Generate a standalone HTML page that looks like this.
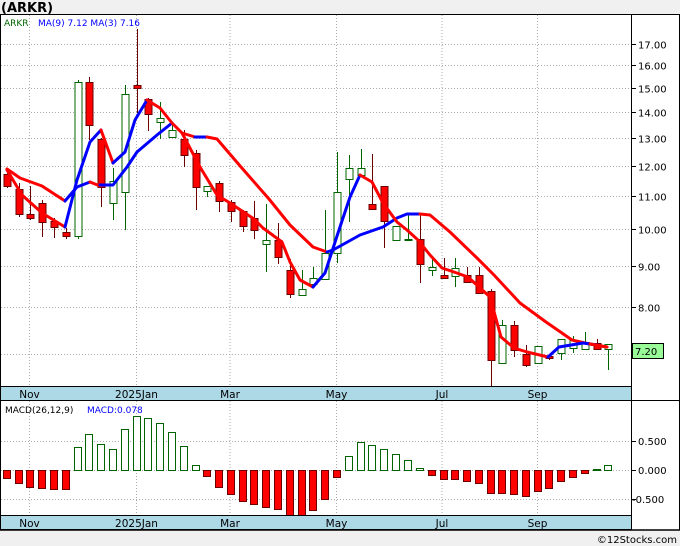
<!DOCTYPE html>
<html><head><meta charset="utf-8"><style>
html,body{margin:0;padding:0;background:#f0f0f0;}
svg{display:block;font-family:"DejaVu Sans","Liberation Sans",sans-serif;}
</style></head><body>
<svg id="s" width="680" height="546" xmlns="http://www.w3.org/2000/svg">
<rect x="0" y="0" width="680" height="546" fill="#f0f0f0"/>
<text x="1" y="12" font-size="13" font-weight="bold" fill="#000">(ARKR)</text>
<rect x="0" y="14" width="680" height="516" fill="#fff"/>
<g id="g"></g>
</svg>
<script>
var NS="http://www.w3.org/2000/svg",g=document.getElementById('g');
function el(t,a,txt){var e=document.createElementNS(NS,t);for(var k in a)e.setAttribute(k,a[k]);if(txt!==undefined)e.textContent=txt;g.appendChild(e);return e;}
function Y(p){return 1034.2-349.5*Math.log(p);}
var vx=[29.5,136.5,230,336.5,442,537.5];
vx.forEach(function(x){el('line',{x1:x,y1:15,x2:x,y2:386,stroke:'#aaa','stroke-dasharray':'1,2'});el('line',{x1:x,y1:401,x2:x,y2:515,stroke:'#aaa','stroke-dasharray':'1,2'});});
var pl=[17,16,15,14,13,12,11,10,9,8,7];
pl.forEach(function(p){var y=Math.round(Y(p))+.5;el('line',{x1:1,y1:y,x2:631,y2:y,stroke:'#aaa','stroke-dasharray':'1,2'});el('line',{x1:631,y1:y,x2:636,y2:y,stroke:'#000'});if(p!=7)el('text',{x:638,y:y+4,'font-size':10,fill:'#000'},p.toFixed(2));});
[441,470,499].forEach(function(y){el('line',{x1:1,y1:y+.5,x2:631,y2:y+.5,stroke:'#aaa','stroke-dasharray':'1,2'});el('line',{x1:631,y1:y+.5,x2:636,y2:y+.5,stroke:'#000'});});
el('text',{x:638,y:445,'font-size':10},'0.500');el('text',{x:638,y:474,'font-size':10},'0.000');el('text',{x:632,y:503,'font-size':10},'-0.500');
var C=[[7,174,186,170,188,0],[19,189,214,183,217,0],[30,214,218,186,220,0],[42,203,222,200,237,0],[54,221,227,218,238,0],[66,232,236,228,239,0],[78,82,236,80,239,1],[89,82,125,77,140,0],[101,139,187,138,207,0],[113,181,203,168,220,1],[125,94,192,85,230,1],[137,85,88,29,113,0],[148,99,114,98,131,0],[160,118,122,102,139,1],[172,130,137,125,138,1],[184,139,155,130,167,0],[196,153,187,150,210,0],[207,186,191,186,197,1],[219,183,201,181,212,0],[231,202,211,200,222,0],[243,211,226,210,232,0],[254,218,230,201,239,0],[266,240,244,204,272,1],[278,240,257,223,264,0],[290,270,294,259,298,0],[302,289,295,270,295,1],[313,278,284,267,284,1],[325,253,279,210,279,1],[337,192,253,152,263,1],[349,168,179,155,222,1],[361,168,175,149,175,1],[372,204,209,154,209,0],[384,186,221,186,248,0],[396,226,240,226,240,1],[408,239,240,213,240,1],[420,239,264,214,283,0],[432,267,270,258,276,1],[444,275,278,258,278,0],[455,268,276,258,287,1],[467,275,282,267,282,0],[479,275,293,267,293,0],[491,291,360,289,386,0],[502,325,363,320,363,1],[514,325,350,321,357,0],[526,354,365,345,367,0],[538,346,363,346,363,1],[549,356,358,354,360,0],[561,339,353,339,360,1],[573,340,348,336,353,1],[585,342,349,332,350,1],[597,343,349,339,350,0],[608,344,349,344,370,1]];
C.forEach(function(c){var up=c[5],col=up?'#006400':'#6b0000';
el('line',{x1:c[0]+.5,y1:c[3],x2:c[0]+.5,y2:c[4],stroke:col});
el('rect',{x:c[0]-3,y:c[1]+.5,width:7,height:Math.max(1,c[2]-c[1]),fill:up?'#fff':'#f00',stroke:up?'#006400':'#6b0000'});});
function pline(pts,col){el('polyline',{points:pts.map(function(p){return p.join(',')}).join(' '),fill:'none',stroke:col,'stroke-width':3,'stroke-linejoin':'round','stroke-linecap':'round'});}
pline([[7,169],[20,178],[42,186],[65,201]],'#f00');
pline([[65,201],[77,187],[90,182]],'#00f');
pline([[90,182],[100,186]],'#f00');
pline([[100,185],[113,185],[127,167],[137,152],[157,135],[172,123]],'#00f');
pline([[182,133],[195,137],[205,137]],'#f00');pline([[195,137],[207,137]],'#00f');
pline([[207,137],[217,139],[241,167],[269,199],[290,225],[313,247],[327,252]],'#f00');
pline([[327,252],[333,250],[360,235],[383,227],[397,218],[407,214],[420,214]],'#00f');
pline([[420,214],[430,215],[450,232],[477,258],[494,275],[520,303],[546,322],[572,340],[585,343],[607,347]],'#f00');
pline([[7,170],[22,195],[42,213],[65,227]],'#f00');
pline([[65,227],[77,180],[90,142],[101,130]],'#00f');
pline([[101,130],[113,163]],'#f00');
pline([[113,163],[125,152],[135,120],[147,100]],'#00f');
pline([[147,100],[160,108],[172,123],[182,133],[200,167],[217,195],[230,203],[245,213],[254,219],[263,228],[282,242],[290,262],[300,280],[313,287]],'#f00');
pline([[313,287],[325,273],[338,233],[350,197],[360,175]],'#00f');
pline([[360,175],[372,182],[383,203],[397,222],[407,230],[418,240],[430,255],[442,268],[454,272],[468,277],[490,297],[501,337],[514,348],[527,352],[548,357]],'#f00');
pline([[548,357],[559,347],[583,343],[597,345]],'#00f');
pline([[590,344],[607,347]],'#f00');
var M=[478,483,487,488,489,489,447,434,444,449,429,416,418,423,432,446,465,476,487,494,501,504,507,509,515,515,510,499,477,456,442,445,449,454,460,468,475,479,479,481,483,493,493,494,496,491,488,481,477,473,469,465];
M.forEach(function(v,i){var x=C[i][0];var up=v<470;var y1=up?v:470,h=Math.abs(v-470);if(h<1)h=1;
el('rect',{x:x-3.5,y:y1+.5,width:7,height:h,fill:up?'#fff':'#f00',stroke:up?'#006400':'#6b0000'});});
el('rect',{x:0.5,y:386.5,width:631,height:14,fill:'#add8e6',stroke:'#000'});
el('rect',{x:0.5,y:515.5,width:631,height:14,fill:'#add8e6',stroke:'#000'});
var lb=[['Nov',29.5],['2025Jan',136.5],['Mar',230],['May',336.5],['Jul',442],['Sep',537.5]];
lb.forEach(function(l){el('text',{x:l[1],y:398,'font-size':10.5,'text-anchor':'middle',fill:'#000'},l[0]);el('text',{x:l[1],y:527,'font-size':10.5,'text-anchor':'middle',fill:'#000'},l[0]);});
el('line',{x1:0,y1:14.5,x2:680,y2:14.5,stroke:'#000'});
el('line',{x1:0.5,y1:14,x2:0.5,y2:530,stroke:'#000'});
el('line',{x1:631.5,y1:14,x2:631.5,y2:530,stroke:'#000'});
el('line',{x1:679.5,y1:14,x2:679.5,y2:530,stroke:'#000'});
el('line',{x1:0,y1:400.5,x2:680,y2:400.5,stroke:'#000'});
el('line',{x1:0,y1:530,x2:680,y2:530,stroke:'#000','stroke-width':1.5});
el('text',{x:4,y:26,'font-size':9,fill:'#006400'},'ARKR');
el('text',{x:38,y:26,'font-size':9,fill:'#00f'},'MA(9)  7.12  MA(3)  7.16');
el('text',{x:5,y:413,'font-size':9,fill:'#000'},'MACD(26,12,9)');
el('text',{x:87,y:413,'font-size':9,fill:'#00f'},'MACD:0.078');
el('rect',{x:632.5,y:343.5,width:31,height:15,fill:'#98fb98',stroke:'#000'});
el('text',{x:635,y:355,'font-size':10,fill:'#000'},'7.20');
el('text',{x:677,y:543,'font-size':10,'text-anchor':'end',fill:'#000'},'\u00a912Stocks.com');
</script>
</body></html>
